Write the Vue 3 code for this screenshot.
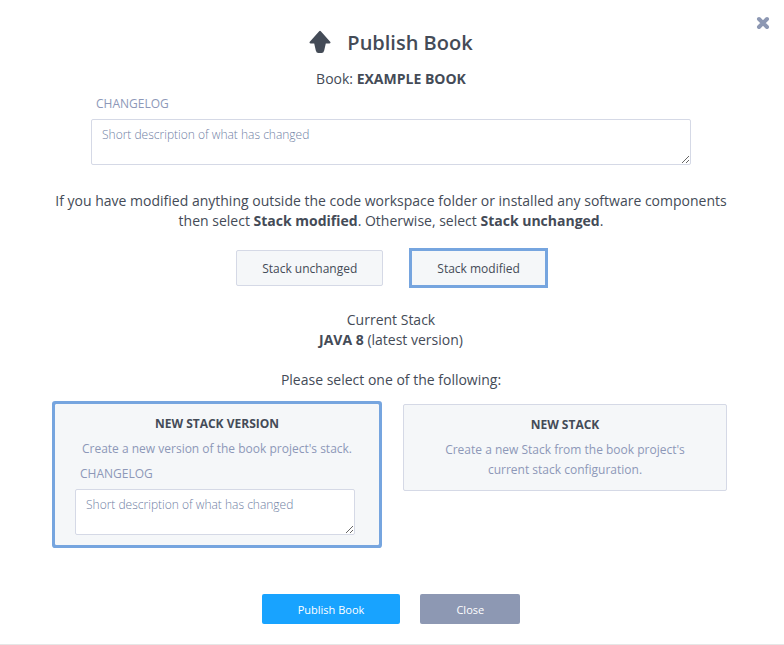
<script setup>
import { ref } from 'vue'

const stackState = ref('modified')
const target = ref('version')
const changelog = ref('')
const stackChangelog = ref('')
</script>

<template>
  <main class="dialog">
    <button class="dismiss" type="button" aria-label="Close dialog">
      <svg width="14" height="14" viewBox="0 0 14 14" aria-hidden="true">
        <path d="M3 3 L11 11 M11 3 L3 11" stroke="#8d98b3" stroke-width="4" stroke-linecap="round" />
      </svg>
    </button>

    <h1 class="title">
      <svg width="22" height="24" viewBox="0 0 22 24" aria-hidden="true">
        <path
          d="M10.2 1.2 Q11 .4 11.8 1.2 L21.4 12 Q22 13.4 20.4 13.4 H16.8 L15.2 20.5 Q14.6 23 12.6 23 H9.4 Q7.4 23 6.8 20.5 L5.2 13.4 H1.6 Q0 13.4 .6 12 Z"
          fill="#444b57"
        />
      </svg>
      <span>Publish Book</span>
    </h1>
    <p class="book">Book: <strong>EXAMPLE BOOK</strong></p>

    <div class="field main-field">
      <label for="changelog">CHANGELOG</label>
      <textarea id="changelog" v-model="changelog" placeholder="Short description of what has changed"></textarea>
    </div>

    <p class="hint">
      If you have modified anything outside the code workspace folder or installed any software components then
      select <strong>Stack modified</strong>. Otherwise, select <strong>Stack unchanged</strong>.
    </p>

    <div class="choices">
      <button type="button" class="choice" :class="{ selected: stackState === 'unchanged' }" @click="stackState = 'unchanged'">
        Stack unchanged
      </button>
      <button type="button" class="choice" :class="{ selected: stackState === 'modified' }" @click="stackState = 'modified'">
        Stack modified
      </button>
    </div>

    <p class="current">Current Stack<br /><strong>JAVA 8</strong> (latest version)</p>
    <p class="prompt">Please select one of the following:</p>

    <div class="cards">
      <section class="card" :class="{ active: target === 'version' }" @click="target = 'version'">
        <h2>NEW STACK VERSION</h2>
        <p>Create a new version of the book project's stack.</p>
        <div class="field">
          <label for="stack-changelog">CHANGELOG</label>
          <textarea id="stack-changelog" v-model="stackChangelog" placeholder="Short description of what has changed"></textarea>
        </div>
      </section>
      <section class="card" :class="{ active: target === 'stack' }" @click="target = 'stack'">
        <h2>NEW STACK</h2>
        <p>Create a new Stack from the book project's current stack configuration.</p>
      </section>
    </div>

    <footer class="actions">
      <button type="button" class="action primary">Publish Book</button>
      <button type="button" class="action">Close</button>
    </footer>
  </main>
</template>

<style>
body {
  margin: 0;
  background: #fff;
}
</style>

<style scoped>
.dialog {
  position: relative;
  box-sizing: border-box;
  padding: 29px 2px 20px 0;
  border-bottom: 1px solid #e6e6e6;
  color: #444b57;
  font: 14px/20px "Open Sans", sans-serif;
  text-align: center;
}
h1, h2, p {
  margin: 0;
}
strong {
  font-weight: 700;
}
button {
  font-family: inherit;
  cursor: pointer;
}
.dismiss {
  position: absolute;
  top: 16px;
  right: 14px;
  display: flex;
  padding: 0;
  border: 0;
  background: none;
}
.title {
  display: flex;
  align-items: center;
  justify-content: center;
  gap: 16px;
  font-size: 20px;
  line-height: 28px;
  font-weight: 600;
}
.title svg {
  margin-bottom: 2px;
}
.book {
  margin-top: 12px;
}
.field {
  display: flex;
  flex-direction: column;
  text-align: left;
}
.field label {
  padding-left: 5px;
  color: #8d98b8;
  font-size: 12px;
  line-height: 20px;
}
.field textarea {
  box-sizing: border-box;
  width: 100%;
  height: 46px;
  margin-top: 5px;
  padding: 6px 10px;
  border: 1px solid #d5d9e6;
  border-radius: 2px;
  background: #fff;
  color: #444b57;
  font: 300 12px/18px "Open Sans", sans-serif;
  resize: both;
}
.field textarea::placeholder {
  color: #7080a4;
  opacity: 1;
}
.main-field {
  max-width: 600px;
  margin: 5px auto 0;
}
.hint {
  max-width: 680px;
  margin: 26px auto 0;
}
.choices {
  display: flex;
  justify-content: center;
  gap: 28px;
  margin-top: 19px;
}
.choice {
  height: 36px;
  padding: 0 25px;
  border: 1px solid #d5d9e6;
  border-radius: 2px;
  background: #f5f7f9;
  color: #444b57;
  font-size: 12px;
}
.choice.selected {
  border-color: #76a5df;
  border-radius: 0;
  box-shadow: 0 0 0 2px #76a5df;
}
.current {
  margin-top: 24px;
}
.prompt {
  margin-top: 20px;
}
.cards {
  display: grid;
  grid-template-columns: 1fr 1fr;
  align-items: start;
  gap: 24px;
  max-width: 672px;
  margin: 14px auto 0;
}
.card {
  padding: 10px 19px;
  border: 1px solid #d5d9e6;
  border-radius: 2px;
  background: #f5f7f9;
  cursor: pointer;
}
.card.active {
  padding-top: 9px;
  padding-bottom: 9px;
  border-color: #f5f7f9;
  border-radius: 1px;
  box-shadow: 0 0 0 3px #76a5df;
}
.card h2 {
  font-size: 12px;
  line-height: 20px;
  font-weight: 700;
}
.card p {
  max-width: 280px;
  margin: 5px auto 0;
  color: #8d98b8;
  font-size: 12px;
}
.card .field {
  max-width: 280px;
  margin-top: 5px;
}
.actions {
  display: flex;
  justify-content: center;
  gap: 20px;
  margin-top: 49px;
}
.action {
  min-width: 100px;
  height: 30px;
  padding: 0 36px;
  border: 0;
  border-radius: 2px;
  background: #8d98b3;
  color: #fff;
  font-size: 11px;
  font-weight: 500;
}
.primary {
  background: #18a3ff;
}
</style>
